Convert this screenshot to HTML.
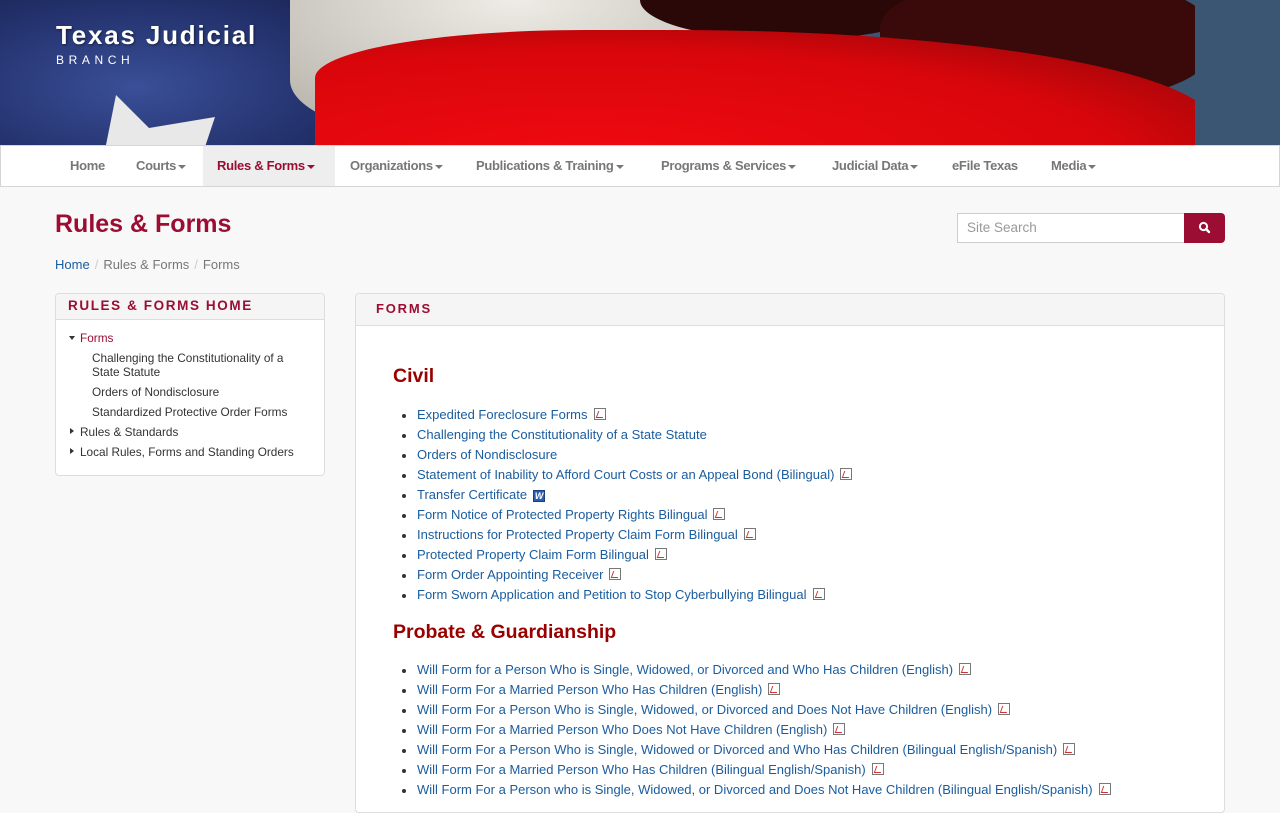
<!DOCTYPE html>
<html><head><meta charset="utf-8"><style>
*{box-sizing:border-box;margin:0;padding:0}
body{width:1280px;height:800px;overflow:hidden;background:#f8f8f8;font-family:"Liberation Sans",Arial,sans-serif;font-size:14px;color:#333}
.banner{position:relative;height:145px;overflow:hidden;background:#3b5672}
.nav{position:absolute;top:145px;left:0;width:1280px;height:42px;background:#fff;border:1px solid #d5d5d5}
.nav span{position:absolute;top:0;height:40px;line-height:40px;font-weight:bold;color:#777;font-size:13px;letter-spacing:-.3px;white-space:nowrap}
.nav span.act{background:#eee;color:#9b0d32;padding:0 14px}
.caret{display:inline-block;width:0;height:0;border-left:4px solid transparent;border-right:4px solid transparent;border-top:4px solid currentColor;vertical-align:middle;margin-left:2px}
h1{position:absolute;left:55px;top:210px;font-size:25px;color:#9b0d32;font-weight:bold}
.bc{position:absolute;left:55px;top:257px;font-size:13px;color:#777}
.bc a{color:#1a5c9e;text-decoration:none}
.bc i{font-style:normal;color:#ccc;padding:0 5px}
.search{position:absolute;left:957px;top:213px;width:268px;height:30px}
.search .in{position:absolute;left:0;top:0;width:228px;height:30px;border:1px solid #ccc;background:#fff;color:#999;padding:6px 9px;font-size:13.5px}
.search .bt{position:absolute;left:227px;top:0;width:41px;height:30px;background:#9b0d32;border-radius:0 4px 4px 0}
.side{position:absolute;left:55px;top:293px;width:270px;height:183px;background:#fff;border:1px solid #ddd;border-radius:4px}
.ph{height:26px;background:#f5f5f5;border-bottom:1px solid #ddd;color:#9b0d32;font-weight:bold;letter-spacing:1.6px;font-size:13.5px;padding:4px 12px;border-radius:4px 4px 0 0}
.side div.it{position:absolute;font-size:11.8px;color:#333;line-height:14px}
.tri{position:absolute;width:0;height:0}
.main{position:absolute;left:355px;top:293px;width:870px;height:520px;background:#fff;border:1px solid #ddd;border-radius:4px}
.main .ph{height:32px;padding:7px 20px;font-size:13px;letter-spacing:1.8px}
h2{position:absolute;left:37px;font-size:19.5px;color:#990000;font-weight:bold}
ul{position:absolute;left:61px;list-style:none}
li{height:20px;line-height:20px;color:#1a5c9e;font-size:13px;position:relative;white-space:nowrap}
li:before{content:"";position:absolute;left:-15px;top:9px;width:4px;height:4px;border-radius:2px;background:#333}
.p{display:inline-block;width:12px;height:12px;border:1px solid #777;background:#fff;margin-left:6px;vertical-align:-1px;position:relative}
.p:after{content:"";position:absolute;left:2px;top:2px;width:6px;height:6px;border-left:1px solid #c33;border-bottom:1px solid #c33;transform:skew(-20deg)}
.w{display:inline-block;width:12px;height:12px;background:#2a5fb0;border:1px solid #1a3f80;margin-left:6px;vertical-align:0;color:#fff;font-size:9px;line-height:10px;text-align:center;font-weight:bold}
</style></head><body>
<div class="banner">
<div style="position:absolute;left:0;top:0;width:340px;height:145px;background:radial-gradient(ellipse at 40% 60%,#3a4f98,#22306a 70%,#1b2555);"></div>
<div style="position:absolute;left:290px;top:-60px;width:560px;height:200px;background:radial-gradient(ellipse at 40% 30%,#eeece6,#b8b4ac 75%);border-radius:0 0 50% 30%"></div>
<div style="position:absolute;left:640px;top:-40px;width:300px;height:80px;background:#2a0808;border-radius:50%"></div>
<div style="position:absolute;left:880px;top:-20px;width:330px;height:120px;background:#3a0a0a;border-radius:40%"></div>
<div style="position:absolute;left:315px;top:30px;width:900px;height:160px;background:radial-gradient(ellipse at 30% 80%,#f00a10,#d8060b 60%,#8a0508 95%);border-radius:30% 60% 0 0"></div>
<div style="position:absolute;left:1195px;top:0;width:85px;height:145px;background:#3b5672"></div>
<div style="position:absolute;left:105px;top:95px;width:110px;height:55px;background:#e8e8e8;clip-path:polygon(10% 0,40% 60%,100% 40%,90% 100%,0 100%)"></div>
<div style="position:absolute;left:56px;top:20px;color:#fff;font-size:26px;font-weight:bold;letter-spacing:1.8px;text-shadow:1px 1px 2px rgba(0,0,0,.5)">Texas Judicial</div>
<div style="position:absolute;left:56px;top:53px;color:#fff;font-size:12px;letter-spacing:4.6px">BRANCH</div>
</div>
<div class="nav">
<span style="left:69px">Home</span>
<span style="left:135px">Courts<i class="caret"></i></span>
<span class="act" style="left:202px;width:132px">Rules &amp; Forms<i class="caret"></i></span>
<span style="left:349px">Organizations<i class="caret"></i></span>
<span style="left:475px">Publications &amp; Training<i class="caret"></i></span>
<span style="left:660px">Programs &amp; Services<i class="caret"></i></span>
<span style="left:831px">Judicial Data<i class="caret"></i></span>
<span style="left:951px">eFile Texas</span>
<span style="left:1050px">Media<i class="caret"></i></span>
</div>
<h1>Rules &amp; Forms</h1>
<div class="bc"><a>Home</a><i>/</i>Rules &amp; Forms<i>/</i>Forms</div>
<div class="search"><div class="in">Site Search</div><div class="bt"><svg width="41" height="30" viewBox="0 0 41 30"><circle cx="19.5" cy="13.5" r="3.6" fill="none" stroke="#fff" stroke-width="2"/><path d="M22 16l3 3" stroke="#fff" stroke-width="2.4" stroke-linecap="round"/></svg></div></div>
<div class="side">
<div class="ph">RULES &amp; FORMS HOME</div>
<div class="tri" style="left:13px;top:42px;border-left:3px solid transparent;border-right:3px solid transparent;border-top:4px solid #333"></div>
<div class="it" style="left:24px;top:37px;color:#9b0d32">Forms</div>
<div class="it" style="left:36px;top:57px">Challenging the Constitutionality of a<br>State Statute</div>
<div class="it" style="left:36px;top:91px">Orders of Nondisclosure</div>
<div class="it" style="left:36px;top:111px">Standardized Protective Order Forms</div>
<div class="tri" style="left:14px;top:134px;border-top:3px solid transparent;border-bottom:3px solid transparent;border-left:4px solid #333"></div>
<div class="it" style="left:24px;top:131px">Rules &amp; Standards</div>
<div class="tri" style="left:14px;top:154px;border-top:3px solid transparent;border-bottom:3px solid transparent;border-left:4px solid #333"></div>
<div class="it" style="left:24px;top:151px">Local Rules, Forms and Standing Orders</div>
</div>
<div class="main">
<div class="ph">FORMS</div>
<h2 style="top:71px">Civil</h2>
<ul style="top:111px">
<li>Expedited Foreclosure Forms<i class="p"></i></li>
<li>Challenging the Constitutionality of a State Statute</li>
<li>Orders of Nondisclosure</li>
<li>Statement of Inability to Afford Court Costs or an Appeal Bond (Bilingual)<i class="p"></i></li>
<li>Transfer Certificate<i class="w">W</i></li>
<li>Form Notice of Protected Property Rights Bilingual<i class="p"></i></li>
<li>Instructions for Protected Property Claim Form Bilingual<i class="p"></i></li>
<li>Protected Property Claim Form Bilingual<i class="p"></i></li>
<li>Form Order Appointing Receiver<i class="p"></i></li>
<li>Form Sworn Application and Petition to Stop Cyberbullying Bilingual<i class="p"></i></li>
</ul>
<h2 style="top:327px">Probate &amp; Guardianship</h2>
<ul style="top:366px">
<li>Will Form for a Person Who is Single, Widowed, or Divorced and Who Has Children (English)<i class="p"></i></li>
<li>Will Form For a Married Person Who Has Children (English)<i class="p"></i></li>
<li>Will Form For a Person Who is Single, Widowed, or Divorced and Does Not Have Children (English)<i class="p"></i></li>
<li>Will Form For a Married Person Who Does Not Have Children (English)<i class="p"></i></li>
<li>Will Form For a Person Who is Single, Widowed or Divorced and Who Has Children (Bilingual English/Spanish)<i class="p"></i></li>
<li>Will Form For a Married Person Who Has Children (Bilingual English/Spanish)<i class="p"></i></li>
<li>Will Form For a Person who is Single, Widowed, or Divorced and Does Not Have Children (Bilingual English/Spanish)<i class="p"></i></li>
</ul>
</div>
</body></html>
